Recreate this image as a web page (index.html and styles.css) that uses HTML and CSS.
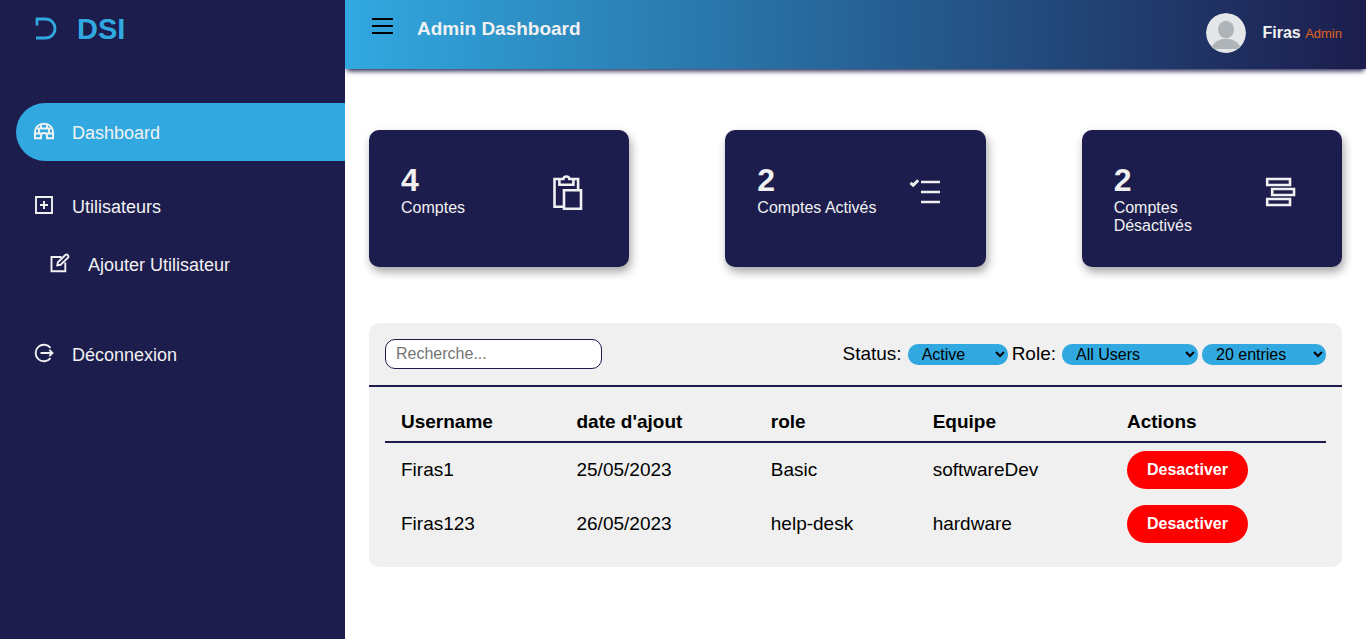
FILE: index.html
```html
<!DOCTYPE html>
<html lang="fr">
<head>
<meta charset="utf-8">
<meta name="viewport" content="width=device-width, initial-scale=1">
<title>Admin Dashboard</title>
<link rel="stylesheet" href="styles.css">
</head>
<body>
<aside class="sidebar">
  <div class="brand">
    <svg class="brand-icon" viewBox="0 0 29 29" aria-hidden="true"><path d="M5 10.500V4h8.500a9.300 9.300 0 0 1 0 19H4"/></svg>
    <span>DSI</span>
  </div>
  <nav>
    <ul class="menu">
      <li>
        <a class="menu-link active" href="#">
          <svg class="menu-icon" viewBox="0 0 24 24" aria-hidden="true"><path d="M2.900 18.200V12C2.900 7.200 6.600 3.800 12 3.800S21.100 7.200 21.100 12v6.200h-6.100V16a3 3 0 0 0-6 0v2.200zM4.500 8.500h15M2.800 13.500h6.700M14.500 13.500h6.700M9 4.200v4.300M15 4.200v4.300M7 8.500v5M17 8.500v5"/></svg>
          <span>Dashboard</span>
        </a>
      </li>
      <li>
        <a class="menu-link" href="#">
          <svg class="menu-icon" viewBox="0 0 24 24" aria-hidden="true"><path d="M4 3h16v16H4zM12 7v8M8 11h8"/></svg>
          <span>Utilisateurs</span>
        </a>
        <ul class="submenu">
          <li>
            <a class="menu-link" href="#">
              <svg class="menu-icon" viewBox="0 0 24 24" aria-hidden="true"><path d="M13.500 5H3.500v14.200h13.800V10.500M9.300 13.300l.6-3L17.300 3c1.800-1.200 4 .8 2.700 2.600l-7.400 7.200z"/></svg>
              <span>Ajouter Utilisateur</span>
            </a>
          </li>
        </ul>
      </li>
      <li>
        <a class="menu-link" href="#">
          <svg class="menu-icon" viewBox="0 0 24 24" aria-hidden="true"><path d="M18.500 5.900a8.300 8.300 0 1 0 0 10.200M8.500 11h12M17.300 7.800l3.200 3.200-3.200 3.200"/></svg>
          <span>Déconnexion</span>
        </a>
      </li>
    </ul>
  </nav>
</aside>
<div class="page">
  <header class="topbar">
    <div class="heading">
      <button class="toggle" type="button" aria-label="Menu"><svg viewBox="0 0 32 32" aria-hidden="true"><path d="M3 6h21M3 13h21M3 20h21"/></svg></button>
      <h1>Admin Dashboard</h1>
    </div>
    <div class="user">
      <svg class="avatar" viewBox="0 0 40 40" role="img" aria-label="Firas"><circle cx="20" cy="20" r="20" fill="#e4e6e8"/><ellipse cx="20" cy="16.500" rx="8" ry="8.700" fill="#aeb4b8"/><path d="M5 36c1.500-6 7.500-10.200 15-10.200S33.500 30 35 36z" fill="#aeb4b8"/></svg>
      <p><strong>Firas</strong> <small>Admin</small></p>
    </div>
  </header>
  <main>
    <section class="cards">
      <article class="card">
        <div><h2>4</h2><span>Comptes</span></div>
        <svg class="card-icon" viewBox="0 0 48 48" aria-hidden="true"><path d="M10 17H5.500v27.700h9.300M24.500 17h4.600v11M10.400 17v5.700h14V17h-4c-.4-3.300-5.600-3.300-6 0zM15 28.300h17v18.500H15z"/></svg>
      </article>
      <article class="card">
        <div><h2>2</h2><span>Comptes Activés</span></div>
        <svg class="card-icon" viewBox="0 0 48 48" aria-hidden="true"><path d="M15 20h19M15 30h19M15 40h19"/><path class="tick" d="M4.500 20.800l2.700 2.400 5-5"/></svg>
      </article>
      <article class="card">
        <div><h2>2</h2><span>Comptes Désactivés</span></div>
        <svg class="card-icon" viewBox="0 0 48 48" aria-hidden="true"><path d="M5.200 17h22.800v6H5.200zM10.200 27h21.800v6H10.200zM5.200 37h22.800v6H5.200z"/></svg>
      </article>
    </section>
    <section class="panel">
      <form class="tools">
        <input class="search" type="search" placeholder="Recherche..." aria-label="Recherche">
        <div class="filters">
          <label for="status">Status:</label>
          <select id="status" class="status"><option>Active</option><option>Inactive</option></select>
          <label for="role">Role:</label>
          <select id="role" class="role"><option>All Users</option><option>Basic</option><option>help-desk</option></select>
          <select class="entries" aria-label="Entries"><option>20 entries</option><option>50 entries</option></select>
        </div>
      </form>
      <div class="table-wrap">
        <table>
          <colgroup><col class="col-name"><col class="col-date"><col class="col-role"><col class="col-team"><col></colgroup>
          <thead><tr><th>Username</th><th>date d'ajout</th><th>role</th><th>Equipe</th><th>Actions</th></tr></thead>
          <tbody>
            <tr><td>Firas1</td><td>25/05/2023</td><td>Basic</td><td>softwareDev</td><td><button class="disable" type="button">Desactiver</button></td></tr>
            <tr><td>Firas123</td><td>26/05/2023</td><td>help-desk</td><td>hardware</td><td><button class="disable" type="button">Desactiver</button></td></tr>
          </tbody>
        </table>
      </div>
    </section>
  </main>
</div>
</body>
</html>
```
FILE: styles.css
```css
:root {
  --navy: #1c1d4d;
  --blue: #31a9e0;
  --light: #f1f1f1;
}

* {
  box-sizing: border-box;
  margin: 0;
  padding: 0;
}

body {
  display: flex;
  min-height: 100vh;
  background: #fff;
  color: #000;
  font-family: Arial, "Liberation Sans", sans-serif;
  font-size: 16px;
}

ul {
  list-style: none;
}

a {
  color: inherit;
  text-decoration: none;
}

button,
input,
select {
  font: inherit;
  border: 0;
}

svg {
  flex: none;
  display: block;
  fill: none;
}

.sidebar {
  flex: none;
  width: 345px;
  background: var(--navy);
  color: var(--light);
}

.brand {
  display: flex;
  align-items: center;
  gap: 16px;
  height: 58px;
  padding-left: 32px;
  color: var(--blue);
  font-size: 29px;
  font-weight: bold;
}

.brand-icon {
  width: 29px;
  height: 29px;
  stroke: currentColor;
  stroke-width: 2.8;
}

.menu {
  display: flex;
  flex-direction: column;
  gap: 16px;
  padding: 45px 0 0 16px;
}

.submenu {
  padding: 0 0 16px 16px;
}

.menu-link {
  display: flex;
  align-items: center;
  gap: 16px;
  height: 58px;
  padding-left: 16px;
  font-size: 18px;
}

.menu-link span {
  padding-top: 3px;
}

.menu-link.active {
  background: var(--blue);
  border-radius: 29px 0 0 29px;
}

.menu-icon {
  width: 24px;
  height: 24px;
  stroke: currentColor;
  stroke-width: 1.9;
}

.page {
  flex: 1;
  min-width: 0;
}

.topbar {
  display: flex;
  justify-content: space-between;
  padding: 13px 24px 16px;
  background: linear-gradient(to right, var(--blue), var(--navy));
  box-shadow: 0 4px 5px -2px var(--navy);
}

.heading,
.user {
  display: flex;
  align-items: center;
  gap: 16px;
}

.heading {
  align-self: flex-start;
  color: var(--light);
}

.heading h1 {
  font-size: 19px;
}

.toggle {
  width: 32px;
  height: 32px;
  background: none;
  color: #000;
  cursor: pointer;
}

.toggle svg {
  width: 32px;
  height: 32px;
  stroke: currentColor;
  stroke-width: 1.8;
}

.avatar {
  width: 40px;
  height: 40px;
  border-radius: 50%;
}

.user strong {
  color: var(--light);
}

.user small {
  color: #e0621a;
  font-size: 13px;
}

main {
  padding: 61px 24px 24px;
}

.cards {
  display: grid;
  grid-template-columns: repeat(3, 1fr);
  gap: 96px;
}

.card {
  display: flex;
  justify-content: space-between;
  align-items: flex-start;
  gap: 16px;
  padding: 32px;
  border-radius: 10px;
  background: var(--navy);
  color: var(--light);
  line-height: 18px;
  box-shadow: 2px 5px 10px rgba(0, 0, 0, 0.35);
}

.card h2 {
  font-size: 32px;
  line-height: 37px;
}

.card-icon {
  width: 48px;
  height: 48px;
  stroke: currentColor;
  stroke-width: 2.6;
}

.tick {
  stroke-width: 3;
}

.panel {
  margin-top: 56px;
  border-radius: 10px;
  background: #f0f0f0;
  font-size: 19px;
}

.tools {
  display: flex;
  justify-content: space-between;
  align-items: flex-start;
  padding: 16px;
  border-bottom: 2px solid var(--navy);
}

.search {
  width: 217px;
  height: 30px;
  padding: 0 10px;
  border: 1px solid var(--navy);
  border-radius: 10px;
  background: #fff;
  font-size: 16px;
}

.filters {
  display: flex;
  align-items: center;
  gap: 4px;
  height: 30px;
}

.filters label {
  margin-right: 2px;
}

.filters select {
  height: 21px;
  padding: 0 10px;
  border-radius: 10px;
  background: var(--blue);
  color: #000;
  font-size: 16px;
}

.status {
  width: 100px;
}

.role {
  width: 136px;
}

.entries {
  width: 124px;
}

.table-wrap {
  padding: 16px;
}

table {
  width: 100%;
  border-collapse: collapse;
  table-layout: fixed;
}

.col-name {
  width: 18.65%;
}

.col-date,
.col-team {
  width: 20.65%;
}

.col-role {
  width: 17.2%;
}

th,
td {
  padding: 8px 16px;
  line-height: 22px;
  text-align: left;
}

thead tr {
  border-bottom: 2px solid var(--navy);
}

.disable {
  display: block;
  width: 121px;
  height: 38px;
  border-radius: 19px;
  background: #f00;
  color: #fff;
  font-size: 16px;
  font-weight: bold;
  cursor: pointer;
}
```
